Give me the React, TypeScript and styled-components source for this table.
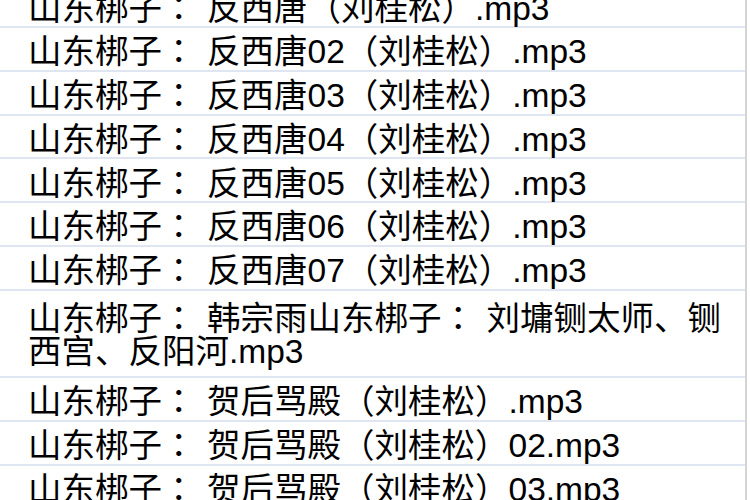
import React from "react";
import styled, { createGlobalStyle } from "styled-components";

const Global = createGlobalStyle`
  html, body {
    margin: 0;
    padding: 0;
    background: #ffffff;
    overflow: hidden;
  }
  body {
    width: 750px;
    height: 500px;
  }
`;

const Sheet = styled.div`
  width: 747px;
  height: 520px;
  box-sizing: border-box;
  margin-top: -15.75px;
  border-right: 2px solid #d4d4d4;
  display: flex;
  flex-direction: column;
`;

const Row = styled.div<{ $lines?: number }>`
  box-sizing: border-box;
  flex: 0 0 auto;
  height: ${(p) => 43.75 * (p.$lines ?? 1)}px;
  border-bottom: 2px solid #dfe6f2;
  padding: ${(p) => ((p.$lines ?? 1) > 1 ? "0" : "3px")} 14px 0 28px;
  display: flex;
  align-items: center;
`;

const CellText = styled.span`
  font-family: "Liberation Sans", "Noto Sans CJK SC", sans-serif;
  font-size: 33.5px;
  line-height: 33px;
  color: #000000;
  white-space: normal;
  word-break: break-all;
`;

const Colon = styled.span`
  font-family: "Noto Sans CJK JP", "Noto Sans CJK SC", sans-serif;
  margin: 0 11.5px 0 0;
`;

const files: { name: string; lines?: number }[] = [
  { name: "山东梆子：反西唐（刘桂松）.mp3" },
  { name: "山东梆子：反西唐02（刘桂松）.mp3" },
  { name: "山东梆子：反西唐03（刘桂松）.mp3" },
  { name: "山东梆子：反西唐04（刘桂松）.mp3" },
  { name: "山东梆子：反西唐05（刘桂松）.mp3" },
  { name: "山东梆子：反西唐06（刘桂松）.mp3" },
  { name: "山东梆子：反西唐07（刘桂松）.mp3" },
  { name: "山东梆子：韩宗雨山东梆子：刘墉铡太师、铡西宫、反阳河.mp3", lines: 2 },
  { name: "山东梆子：贺后骂殿（刘桂松）.mp3" },
  { name: "山东梆子：贺后骂殿（刘桂松）02.mp3" },
  { name: "山东梆子：贺后骂殿（刘桂松）03.mp3" },
];

function renderName(name: string) {
  const parts = name.split("：");
  return parts.map((part, i) => (
    <React.Fragment key={i}>
      {i > 0 && <Colon>：</Colon>}
      {part}
    </React.Fragment>
  ));
}

export default function App() {
  return (
    <>
      <Global />
      <Sheet>
        {files.map((f) => (
          <Row key={f.name} $lines={f.lines}>
            <CellText>{renderName(f.name)}</CellText>
          </Row>
        ))}
      </Sheet>
    </>
  );
}
